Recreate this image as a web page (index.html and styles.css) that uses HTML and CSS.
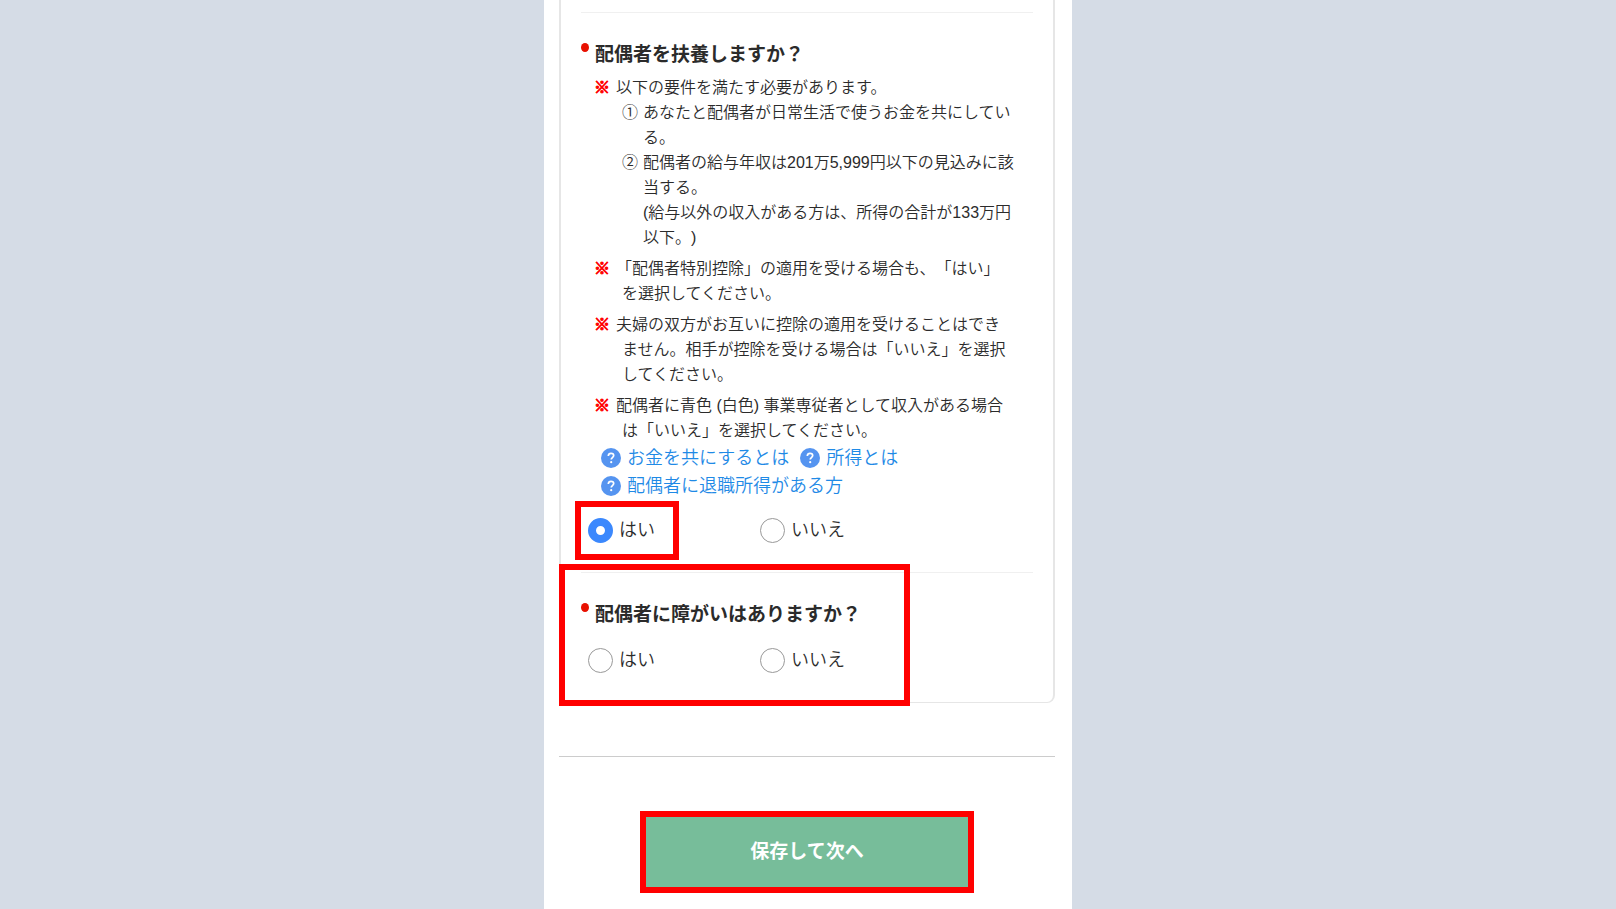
FILE: index.html
```html
<!DOCTYPE html>
<html lang="ja">
<head>
<meta charset="utf-8">
<meta name="viewport" content="width=device-width, initial-scale=1">
<title>配偶者の扶養</title>
<link rel="stylesheet" href="styles.css">
</head>
<body>
<main class="panel">
  <form class="form">
    <div class="card">
      <section class="question">
        <h2 class="title" id="q1">配偶者を扶養しますか？</h2>
        <div class="notes">
          <p class="note"><span class="mark">※</span>以下の要件を満たす必要があります。</p>
          <ol class="terms">
            <li class="term"><span class="num">①</span><span>あなたと配偶者が日常生活で使うお金を共にしてい<br>る。</span></li>
            <li class="term"><span class="num">②</span><span>配偶者の給与年収は201万5,999円以下の見込みに該<br>当する。<br>(給与以外の収入がある方は、所得の合計が133万円<br>以下。)</span></li>
          </ol>
          <p class="note spaced"><span class="mark">※</span>「配偶者特別控除」の適用を受ける場合も、「はい」<br>を選択してください。</p>
          <p class="note spaced"><span class="mark">※</span>夫婦の双方がお互いに控除の適用を受けることはでき<br>ません。相手が控除を受ける場合は「いいえ」を選択<br>してください。</p>
          <p class="note spaced"><span class="mark">※</span>配偶者に青色 (白色) 事業専従者として収入がある場合<br>は「いいえ」を選択してください。</p>
        </div>
        <div class="helps">
          <a class="help" href="#"><svg class="help-icon" viewBox="0 0 20 20" aria-hidden="true"><circle cx="10" cy="10" r="10" fill="#5594f0"/><path d="M7.3 8C7.3 6.2 8.4 5.3 10 5.3s2.7.9 2.7 2.3c0 1.9-2.5 2.1-2.5 4" fill="none" stroke="#fff" stroke-width="1.7"/><circle cx="10.2" cy="14.2" r="1.1" fill="#fff"/></svg>お金を共にするとは</a>
          <a class="help" href="#"><svg class="help-icon" viewBox="0 0 20 20" aria-hidden="true"><circle cx="10" cy="10" r="10" fill="#5594f0"/><path d="M7.3 8C7.3 6.2 8.4 5.3 10 5.3s2.7.9 2.7 2.3c0 1.9-2.5 2.1-2.5 4" fill="none" stroke="#fff" stroke-width="1.7"/><circle cx="10.2" cy="14.2" r="1.1" fill="#fff"/></svg>所得とは</a>
          <a class="help" href="#"><svg class="help-icon" viewBox="0 0 20 20" aria-hidden="true"><circle cx="10" cy="10" r="10" fill="#5594f0"/><path d="M7.3 8C7.3 6.2 8.4 5.3 10 5.3s2.7.9 2.7 2.3c0 1.9-2.5 2.1-2.5 4" fill="none" stroke="#fff" stroke-width="1.7"/><circle cx="10.2" cy="14.2" r="1.1" fill="#fff"/></svg>配偶者に退職所得がある方</a>
        </div>
        <div class="options" role="radiogroup" aria-labelledby="q1">
          <label class="option"><input class="radio" type="radio" name="support" value="yes" checked>はい</label>
          <label class="option"><input class="radio" type="radio" name="support" value="no">いいえ</label>
          <span class="frame frame-answer"></span>
        </div>
      </section>
      <section class="question">
        <h2 class="title" id="q2">配偶者に障がいはありますか？</h2>
        <div class="options" role="radiogroup" aria-labelledby="q2">
          <label class="option"><input class="radio" type="radio" name="disability" value="yes">はい</label>
          <label class="option"><input class="radio" type="radio" name="disability" value="no">いいえ</label>
        </div>
        <span class="frame frame-question"></span>
      </section>
    </div>
    <hr class="rule">
    <button class="submit" type="button">保存して次へ</button>
  </form>
</main>
</body>
</html>
```

FILE: styles.css
```css
* {
  box-sizing: border-box;
}

body {
  margin: 0;
  background: #d5dce6;
  color: #2b2b2b;
  font-family: "Liberation Sans", "Noto Sans CJK JP", sans-serif;
  font-size: 16px;
  font-weight: 350;
  line-height: 25px;
  text-spacing-trim: space-all;
}

.panel {
  max-width: 528px;
  min-height: 100vh;
  margin: 0 auto;
  padding: 0 17px 16px 15px;
  background: #fff;
}

.form {
  display: flex;
  flex-direction: column;
}

.card {
  padding: 12px 20px 0;
  border: 2px solid #e6e6e6;
  border-top: 0;
  border-bottom-width: 1px;
  border-radius: 0 0 8px 8px;
}

.question {
  position: relative;
  padding: 27px 0 28px;
  border-top: 1px solid #f0f0f0;
}

.title {
  display: flex;
  gap: 6px;
  margin: 0;
  font-size: 19px;
  font-weight: 700;
  line-height: 30px;
}

.title::before {
  content: "";
  width: 8px;
  height: 9px;
  margin-top: 3px;
  border-radius: 50%;
  background: #e81000;
}

.notes {
  margin: 5px 0 0 13px;
  white-space: nowrap;
}

.note {
  margin: 0;
  padding-left: 28px;
  text-indent: -28px;
}

.spaced {
  margin-top: 6px;
}

.mark {
  margin-right: 6px;
  color: #f00;
  -webkit-text-stroke: 1px #f00;
}

.terms {
  margin: 0;
  padding: 0 0 0 28px;
  list-style: none;
}

.term {
  display: flex;
  gap: 5px;
}

.helps {
  display: flex;
  flex-wrap: wrap;
  column-gap: 11px;
  padding: 1px 0 0 20px;
}

.help {
  display: flex;
  align-items: center;
  gap: 6px;
  color: #1f8ae6;
  font-size: 18px;
  line-height: 28px;
  text-decoration: none;
}

.help-icon {
  width: 20px;
  height: 20px;
}

.options {
  position: relative;
  display: flex;
  margin-top: 17px;
  padding-left: 7px;
}

.option {
  display: flex;
  align-items: center;
  gap: 6px;
  width: 172px;
  font-size: 18px;
  line-height: 27px;
}

.radio {
  appearance: none;
  width: 25px;
  height: 25px;
  margin: 0;
  border: 1px solid #999;
  border-radius: 50%;
  background: #fff;
}

.radio:checked {
  border: 8px solid #3b88fd;
}

.frame {
  position: absolute;
  border: 6px solid #f00;
  pointer-events: none;
}

.frame-answer {
  top: -16px;
  left: -6px;
  width: 104px;
  height: 59px;
}

.frame-question {
  top: -9px;
  left: -22px;
  width: 351px;
  height: 142px;
}

.rule {
  width: 100%;
  margin: 53px 0 54px;
  border: 0;
  border-top: 1px solid #ccc;
}

.submit {
  align-self: center;
  width: 100%;
  max-width: 334px;
  padding: 21px 0;
  border: 6px solid #f00;
  background: #77bd9a;
  color: #fff;
  font-family: inherit;
  font-size: 19px;
  font-weight: 700;
  line-height: 28px;
}
```
